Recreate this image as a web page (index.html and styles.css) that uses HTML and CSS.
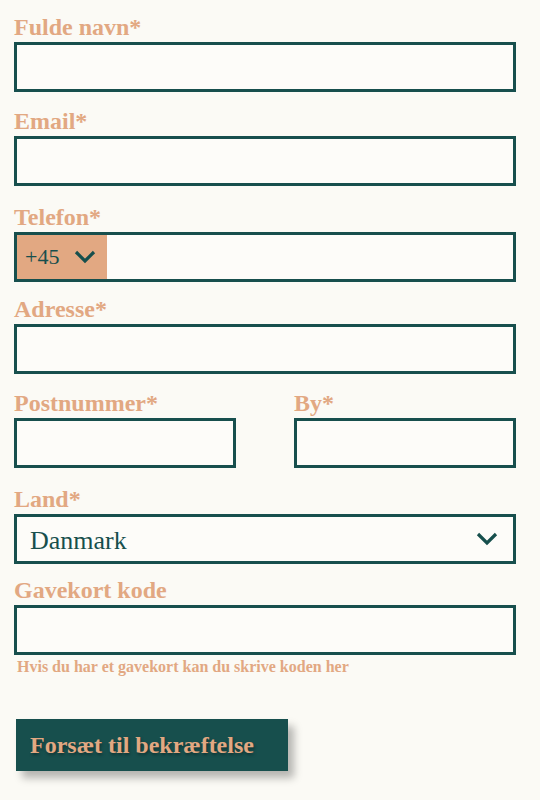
FILE: index.html
```html
<!DOCTYPE html>
<html lang="da">
<head>
<meta charset="utf-8">
<title>Checkout</title>
<link rel="stylesheet" href="styles.css">
</head>
<body>
<form class="form">
  <div class="field">
    <label class="label">Fulde navn*</label>
    <div class="box"></div>
  </div>
  <div class="field">
    <label class="label">Email*</label>
    <div class="box"></div>
  </div>
  <div class="field f-phone">
    <label class="label">Telefon*</label>
    <div class="box phone">
      <div class="prefix">
        <span class="code">+45</span>
        <svg class="chev" width="22" height="14" viewBox="0 0 22 14"><path d="M2 2 L11 11 L20 2" fill="none" stroke="#164f4d" stroke-width="3.2"/></svg>
      </div>
    </div>
  </div>
  <div class="field f-addr">
    <label class="label">Adresse*</label>
    <div class="box"></div>
  </div>
  <div class="row">
    <div class="field">
      <label class="label">Postnummer*</label>
      <div class="box"></div>
    </div>
    <div class="field">
      <label class="label">By*</label>
      <div class="box"></div>
    </div>
  </div>
  <div class="field f-land">
    <label class="label">Land*</label>
    <div class="box select">
      <span class="value">Danmark</span>
      <svg class="chev" width="22" height="14" viewBox="0 0 22 14"><path d="M2 2 L11 11 L20 2" fill="none" stroke="#164f4d" stroke-width="3.2"/></svg>
    </div>
  </div>
  <div class="field f-gift">
    <label class="label">Gavekort kode</label>
    <div class="box"></div>
    <p class="help">Hvis du har et gavekort kan du skrive koden her</p>
  </div>
  <button type="button" class="btn">Forsæt til bekræftelse</button>
</form>
</body>
</html>
```
FILE: styles.css
```css
html, body {
  margin: 0;
  padding: 0;
  background: #fbfaf5;
}
body {
  font-family: "Liberation Serif", "Times New Roman", serif;
  width: 540px;
  height: 800px;
  overflow: hidden;
}
.form {
  display: flex;
  flex-direction: column;
  gap: 16px;
  padding: 14px 24px 0 14px;
}
.field {
  display: flex;
  flex-direction: column;
}
.f-phone { margin-top: 2px; }
.f-addr { margin-top: -2px; }
.f-land { margin-top: 2px; }
.f-gift { margin-top: -3px; }
.label {
  display: block;
  color: #e2a882;
  font-weight: bold;
  font-size: 24px;
  line-height: 26px;
  height: 28px;
}
.box {
  box-sizing: border-box;
  height: 50px;
  border: 3px solid #174f4d;
  background: #fdfcf9;
  display: flex;
  align-items: center;
}
.phone {
  padding: 0;
}
.prefix {
  background: #e2a882;
  height: 100%;
  width: 90px;
  display: flex;
  align-items: center;
  gap: 15px;
  padding-left: 8px;
  box-sizing: border-box;
}
.code {
  color: #174f4d;
  font-size: 22px;
}
.select {
  justify-content: space-between;
  padding: 0 15px 0 13px;
}
.value {
  color: #174f4d;
  font-size: 26px;
  padding-top: 3px;
}
.row {
  display: grid;
  grid-template-columns: 222px 222px;
  column-gap: 58px;
}
.help {
  margin: 3px 0 0 3px;
  color: #e2a882;
  font-weight: bold;
  font-size: 16px;
  line-height: 18px;
}
.btn {
  align-self: flex-start;
  margin: 27px 0 0 2px;
  width: 272px;
  height: 52px;
  border: none;
  background: #174f4d;
  color: #e2a882;
  font-family: "Liberation Serif", "Times New Roman", serif;
  font-weight: bold;
  font-size: 24px;
  text-align: left;
  padding: 0 14px;
  box-shadow: 6px 7px 8px rgba(0, 0, 0, 0.28);
  text-shadow: 1px 2px 3px rgba(0, 0, 0, 0.35);
}
```
